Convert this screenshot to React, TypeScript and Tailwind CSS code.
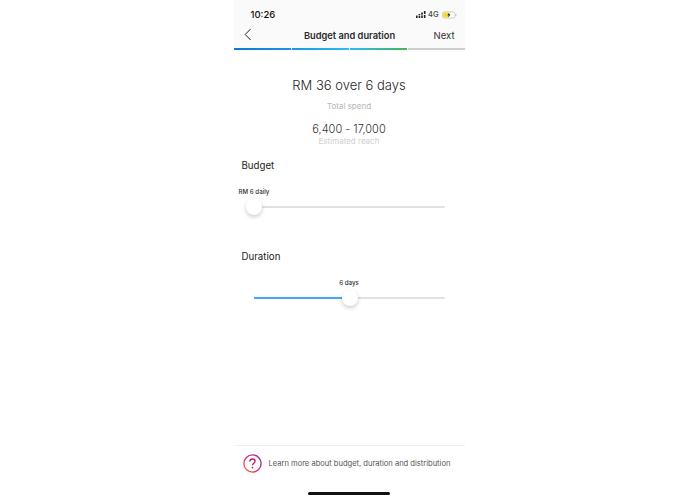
import React from "react";

function Slider({ pct }: { pct: number }) {
  return (
    <div className="relative mx-5 h-[2px] rounded-full bg-[#e2e2e2]">
      <div className="h-full bg-[#3fa9f5]" style={{ width: `${pct}%` }} />
      <div
        className="absolute top-[-7px] -ml-2 h-4 w-4 rounded-full bg-white shadow-[0_2px_4px_rgba(0,0,0,0.2)]"
        style={{ left: `${pct}%` }}
      />
    </div>
  );
}

export default function App() {
  return (
    <div className="flex h-[500px] w-[700px] justify-center overflow-hidden bg-white pr-[2px] font-['Inter',sans-serif]">
      <div className="flex w-[231px] flex-col bg-white">
        <div className="bg-[#fafafa]">
          <div className="flex h-[24px] items-center justify-between pl-[17px] pr-[8px] pt-[5px]">
            <span className="text-[9.5px] font-medium leading-none text-[#111]">10:26</span>
            <div className="flex items-center gap-[2px]">
              <svg width="10" height="7" viewBox="0 0 10 7" fill="#222">
                <rect x="0" y="4.5" width="1.6" height="2.5" />
                <rect x="2.6" y="3" width="1.6" height="1.4" />
                <rect x="2.6" y="5" width="1.6" height="2" />
                <rect x="5.2" y="1.5" width="1.6" height="2.2" />
                <rect x="5.2" y="4.4" width="1.6" height="2.6" />
                <rect x="7.9" y="0" width="1.6" height="3" />
                <rect x="7.9" y="4" width="1.6" height="3" />
              </svg>
              <span className="text-[7.5px] font-medium leading-none text-[#444]">4G</span>
              <svg width="15" height="8" viewBox="0 0 15 8" className="ml-[1px]">
                <rect x="0.4" y="0.9" width="12.6" height="6.2" rx="2" fill="#fff" stroke="#bbb" strokeWidth="0.7" />
                <rect x="1.2" y="1.6" width="5.8" height="4.8" rx="1" fill="#f6d92f" />
                <rect x="13.4" y="3" width="1" height="2" rx="0.5" fill="#bbb" />
                <path d="M7.4 1.4 5.4 4.3h1.4l-.5 2.3 2.2-3H7.1z" fill="#111" />
              </svg>
            </div>
          </div>
          <div className="grid h-[24px] grid-cols-[54px_1fr_54px] items-center">
            <svg width="8" height="13" viewBox="0 0 8 13" fill="none" className="ml-[10px] mb-[4px]">
              <path d="M6.6 1 1.2 6.5l5.4 5.5" stroke="#222" strokeWidth="1" />
            </svg>
            <span className="whitespace-nowrap pl-[1px] text-center text-[9.3px] font-semibold leading-none text-[#2a2a2a]">
              Budget and duration
            </span>
            <span className="pr-[10px] text-right text-[9.5px] leading-none text-[#333]">Next</span>
          </div>
          <div className="flex h-[2px] gap-[1px]">
            <div className="flex-1 bg-gradient-to-r from-[#0f78d8] to-[#1b93ea]" />
            <div className="flex-1 bg-gradient-to-r from-[#1b93ea] to-[#2fbcef]" />
            <div className="flex-1 bg-gradient-to-r from-[#2fbcef] to-[#45b649]" />
            <div className="flex-1 bg-[#cfcfcf]" />
          </div>
        </div>

        <div className="flex flex-1 flex-col">
          <p className="mt-[26px] text-center text-[13px] font-light leading-[18px] text-[#262626]">RM 36 over 6 days</p>
          <p className="mt-[7px] text-center text-[8px] leading-[10px] text-[#b5b5b5]">Total spend</p>
          <p className="mt-[11px] text-center text-[11px] font-light leading-[14px] text-[#333]">6,400 - 17,000</p>
          <p className="text-center text-[8px] leading-[10px] text-[#cfcfcf]">Estimated reach</p>

          <p className="ml-[8px] mt-[14px] text-[9.7px] font-normal leading-[12px] text-[#222]">Budget</p>
          <p className="ml-[5px] mt-[16px] text-[6.2px] font-medium leading-[8px] text-[#333]">RM 6 daily</p>
          <div className="mt-[10px]">
            <Slider pct={0} />
          </div>

          <p className="ml-[8px] mt-[43px] text-[9.7px] font-normal leading-[12px] text-[#222]">Duration</p>
          <p className="mt-[16px] text-center text-[6.2px] font-medium leading-[8px] text-[#333]">6 days</p>
          <div className="mt-[10px]">
            <Slider pct={50.5} />
          </div>
        </div>

        <div className="border-t border-[#efefef]">
          <div className="flex h-[35px] items-center gap-[7px] pl-[9px]">
            <svg width="19" height="19" viewBox="0 0 19 19" fill="none" className="shrink-0">
              <defs>
                <linearGradient id="g" x1="0" y1="1" x2="1" y2="0">
                  <stop offset="0" stopColor="#f58529" />
                  <stop offset="0.45" stopColor="#dd2a7b" />
                  <stop offset="1" stopColor="#8134af" />
                </linearGradient>
              </defs>
              <circle cx="9.5" cy="9.5" r="8.6" stroke="url(#g)" strokeWidth="1.4" />
              <path
                d="M6.9 7.4c0-1.5 1.2-2.4 2.6-2.4s2.6.9 2.6 2.3c0 2-2.6 2-2.6 3.9"
                stroke="#c2186f"
                strokeWidth="1.4"
              />
              <circle cx="9.5" cy="13.6" r="0.9" fill="#c2186f" />
            </svg>
            <span className="whitespace-nowrap text-[7.55px] leading-none text-[#555]">
              Learn more about budget, duration and distribution
            </span>
          </div>
          <div className="mx-auto mt-[11px] h-[3px] w-[82px] rounded-full bg-[#111]" />
          <div className="h-[5px]" />
        </div>
      </div>
    </div>
  );
}
